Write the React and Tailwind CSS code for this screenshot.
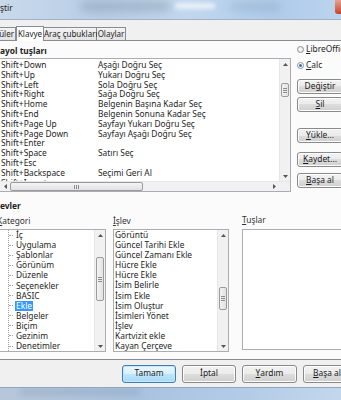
import React from "react";

const FONT = { fontFamily: '"Noto Sans", "DejaVu Sans", sans-serif' };

const shortcuts = [
  ["Shift+Down", "Aşağı Doğru Seç"],
  ["Shift+Up", "Yukarı Doğru Seç"],
  ["Shift+Left", "Sola Doğru Seç"],
  ["Shift+Right", "Sağa Doğru Seç"],
  ["Shift+Home", "Belgenin Başına Kadar Seç"],
  ["Shift+End", "Belgenin Sonuna Kadar Seç"],
  ["Shift+Page Up", "Sayfayı Yukarı Doğru Seç"],
  ["Shift+Page Down", "Sayfayı Aşağı Doğru Seç"],
  ["Shift+Enter", ""],
  ["Shift+Space", "Satırı Seç"],
  ["Shift+Esc", ""],
  ["Shift+Backspace", "Seçimi Geri Al"],
  ["Shift+Insert", ""],
];

const categories = [
  "İç", "Uygulama", "Şablonlar", "Görünüm", "Düzenle", "Seçenekler",
  "BASIC", "Ekle", "Belgeler", "Biçim", "Gezinim", "Denetimler",
];

const functions = [
  "Görüntü", "Güncel Tarihi Ekle", "Güncel Zamanı Ekle", "Hücre Ekle",
  "Hücre Ekle", "İsim Belirle", "İsim Ekle", "İsim Oluştur",
  "İsimleri Yönet", "İşlev", "Kartvizit ekle", "Kayan Çerçeve",
];

function U({ children }) {
  return <span className="underline underline-offset-1">{children}</span>;
}

function Btn({ children, def, className = "" }) {
  return (
    <div
      className={
        "flex items-center justify-center rounded-[3px] border text-[8.4px] text-[#1b1b1b] whitespace-nowrap " +
        (def
          ? "border-[#3c7fb1] bg-[linear-gradient(#eaf6fd,#d9f0fc_50%,#bee6fd_50%,#a7d9f5)] shadow-[inset_0_0_0_1px_#c6e6f9] "
          : "border-[#8a8a8a] bg-[linear-gradient(#f2f2f2,#ebebeb_50%,#dddddd_50%,#cfcfcf)] shadow-[inset_0_0_0_1px_#fcfcfc] ") +
        className
      }
    >
      {children}
    </div>
  );
}

function UpArrow() {
  return (
    <svg width="5" height="3" viewBox="0 0 5 3"><path d="M0 3 L2.5 0 L5 3Z" fill="#555" /></svg>
  );
}
function DownArrow() {
  return (
    <svg width="5" height="3" viewBox="0 0 5 3"><path d="M0 0 L2.5 3 L5 0Z" fill="#555" /></svg>
  );
}
function LeftArrow() {
  return (
    <svg width="3" height="5" viewBox="0 0 3 5"><path d="M3 0 L0 2.5 L3 5Z" fill="#555" /></svg>
  );
}
function RightArrow() {
  return (
    <svg width="3" height="5" viewBox="0 0 3 5"><path d="M0 0 L3 2.5 L0 5Z" fill="#555" /></svg>
  );
}

function Grip({ vertical }) {
  return vertical ? (
    <div className="flex flex-col gap-[1px]">
      <div className="w-[4px] h-[1px] bg-[#8c8c8c]" />
      <div className="w-[4px] h-[1px] bg-[#8c8c8c]" />
      <div className="w-[4px] h-[1px] bg-[#8c8c8c]" />
    </div>
  ) : (
    <div className="flex gap-[1px]">
      <div className="w-[1px] h-[4px] bg-[#8c8c8c]" />
      <div className="w-[1px] h-[4px] bg-[#8c8c8c]" />
      <div className="w-[1px] h-[4px] bg-[#8c8c8c]" />
    </div>
  );
}

function VScroll({ thumbTop, thumbH, height }) {
  return (
    <div className="w-[11px] flex flex-col bg-[#f1f1f1] border-l border-[#e6e6e6]" style={{ height }}>
      <div className="h-[10px] flex items-center justify-center"><UpArrow /></div>
      <div className="flex-1 flex flex-col">
        <div style={{ height: thumbTop }} />
        <div
          className="mx-[1px] rounded-[2px] border border-[#9b9b9b] bg-[linear-gradient(90deg,#f3f3f3,#e2e2e2)] flex items-center justify-center"
          style={{ height: thumbH }}
        >
          <Grip vertical />
        </div>
      </div>
      <div className="h-[10px] flex items-center justify-center"><DownArrow /></div>
    </div>
  );
}

export default function App() {
  return (
    <div className="w-[341px] h-[400px] overflow-hidden flex flex-col bg-[#f0f0f0] text-[#1e1e1e]" style={FONT}>
      {/* Title bar */}
      <div className="relative h-[19px] shrink-0 overflow-hidden bg-[linear-gradient(90deg,#c9d9ea,#b7cde6_30%,#c2d7ee_55%,#aecbea_80%,#bcd4ee)]">
        <div className="absolute left-[80px] top-[2px] w-[90px] h-[9px] rounded-full bg-[#8e9fb3] opacity-60 blur-[4px]" />
        <div className="absolute left-[175px] top-[3px] w-[40px] h-[6px] rounded-full bg-[#f4f8fc] opacity-80 blur-[2px]" />
        <div className="absolute left-[230px] top-[4px] w-[50px] h-[6px] rounded-full bg-[#7f95ad] opacity-40 blur-[4px]" />
        <div className="absolute right-[-6px] top-[0px] w-[12px] h-[14px] rounded-b-[3px] bg-[linear-gradient(#e8a293,#c7422a)]" />
        <div className="relative pl-0 pt-[3px] text-[8.4px] leading-[10px] text-[#1a1a1a]">ştir</div>
      </div>
      <div className="h-[1px] bg-[#9fb2c8] shrink-0" />
      <div className="h-[5px] shrink-0" />

      {/* Tabs */}
      <div className="h-[15px] shrink-0 flex items-end relative z-10">
        <div className="w-[16px] h-[13px] border border-l-0 border-b-0 border-[#898c95] bg-[linear-gradient(#f3f3f3,#e3e3e3)] text-[8px] leading-[12px] flex justify-end pr-[1px] overflow-hidden">
          <span className="whitespace-nowrap">üler</span>
        </div>
        <div className="w-[28px] h-[15px] -mb-[1px] border border-b-0 border-[#898c95] bg-white text-[8px] leading-[13px] text-center">Klavye</div>
        <div className="w-[53px] h-[13px] border border-l-0 border-b-0 border-[#898c95] bg-[linear-gradient(#f3f3f3,#e3e3e3)] text-[8px] leading-[12px] text-center whitespace-nowrap">Araç çubukları</div>
        <div className="w-[29px] h-[13px] border border-l-0 border-b-0 border-[#898c95] bg-[linear-gradient(#f3f3f3,#e3e3e3)] text-[8px] leading-[12px] text-center">Olaylar</div>
      </div>

      {/* Tab panel */}
      <div className="h-[320px] shrink-0 border-t border-b border-[#898c95] bg-[#fbfbfb] flex flex-col">
        <div className="flex">
          {/* left: shortcut list */}
          <div className="w-[291px] shrink-0 flex flex-col">
            <div className="h-[17px] pt-[5px] text-[8.4px] leading-[10px] font-bold">ayol tuşları</div>
            <div className="h-[134px] -ml-[1px] border border-[#abadb3] bg-white flex flex-col">
              <div className="flex h-[122px]">
                <div className="flex-1 overflow-hidden pt-[1px]">
                  {shortcuts.map(([k, f], i) => (
                    <div key={i} className="flex h-[9.8px] text-[8.4px] leading-[9.8px] whitespace-nowrap">
                      <div className="w-[98px] pl-[1px]">{k}</div>
                      <div>{f}</div>
                    </div>
                  ))}
                </div>
                <VScroll thumbTop={14} thumbH={14} height={122} />
              </div>
              <div className="flex h-[10px] bg-[#f1f1f1] border-t border-[#e6e6e6]">
                <div className="w-[10px] flex items-center justify-center"><LeftArrow /></div>
                <div className="flex-1 flex items-center">
                  <div className="w-[133px] h-[9px] rounded-[2px] border border-[#9b9b9b] bg-[linear-gradient(#f3f3f3,#e2e2e2)] flex items-center justify-center">
                    <Grip />
                  </div>
                </div>
                <div className="w-[10px] flex items-center justify-center"><RightArrow /></div>
                <div className="w-[11px] bg-[#f0f0f0]" />
              </div>
            </div>
          </div>

          {/* right column */}
          <div className="flex-1 flex flex-col pl-[6px] pt-[3px]">
            <div className="h-[10px] flex items-center gap-[2px] text-[8.4px] whitespace-nowrap">
              <div className="w-[7px] h-[7px] rounded-full border border-[#8e8f8f] bg-[radial-gradient(#ffffff,#dcdcdc)] shrink-0" />
              <span><U>L</U>ibreOffice</span>
            </div>
            <div className="h-[6px]" />
            <div className="h-[10px] flex items-center gap-[2px] text-[8.4px]">
              <div className="w-[7px] h-[7px] rounded-full border border-[#8e8f8f] bg-white flex items-center justify-center shrink-0">
                <div className="w-[3px] h-[3px] rounded-full bg-[#2d72b8]" />
              </div>
              <span><U>C</U>alc</span>
            </div>
            <div className="h-[9px]" />
            <Btn className="w-[46px] h-[15px]">De<U>ğ</U>iştir</Btn>
            <div className="h-[3px]" />
            <Btn className="w-[46px] h-[15px]"><U>S</U>il</Btn>
            <div className="h-[16px]" />
            <Btn className="w-[46px] h-[15px]"><U>Y</U>ükle...</Btn>
            <div className="h-[9px]" />
            <Btn className="w-[46px] h-[15px]"><U>K</U>aydet...</Btn>
            <div className="h-[6px]" />
            <Btn className="w-[46px] h-[15px]"><U>B</U>aşa al</Btn>
          </div>
        </div>

        {/* İşlevler */}
        <div className="h-[10px] mt-[9px] text-[8.4px] leading-[10px] font-bold">evler</div>
        <div className="flex mt-[5px]">
          {/* Kategori */}
          <div className="w-[113px] shrink-0 flex flex-col">
            <div className="h-[10px] -ml-[3px] text-[8.4px] leading-[10px] text-[#333]"><U>K</U>ategori</div>
            <div className="h-[3px]" />
            <div className="w-[107px] h-[123px] -ml-[1px] border border-[#abadb3] bg-white flex">
              <div className="flex-1 relative overflow-hidden">
                <div className="absolute left-[8px] top-0 bottom-0 border-l border-dotted border-[#a0a0a0]" />
                {categories.map((c, i) => (
                  <div key={i} className="flex items-center h-[10.1px]">
                    <div className="w-[9px]" />
                    <div className="w-[4px] border-t border-dotted border-[#a0a0a0]" />
                    <div className="w-[2px]" />
                    <div
                      className={
                        "text-[8.4px] leading-[10px] px-[1px] whitespace-nowrap " +
                        (c === "Ekle" ? "bg-[#3399ff] text-white" : "")
                      }
                    >
                      {c}
                    </div>
                  </div>
                ))}
              </div>
              <VScroll thumbTop={17} thumbH={44} height={121} />
            </div>
          </div>

          {/* İşlev */}
          <div className="w-[129px] shrink-0 flex flex-col">
            <div className="h-[10px] text-[8.4px] leading-[10px] text-[#333]"><U>İ</U>şlev</div>
            <div className="h-[3px]" />
            <div className="w-[116px] h-[123px] border border-[#abadb3] bg-white flex">
              <div className="flex-1 overflow-hidden">
                {functions.map((f, i) => (
                  <div key={i} className="h-[10.1px] pl-[1px] text-[8.4px] leading-[10.1px] whitespace-nowrap">{f}</div>
                ))}
              </div>
              <VScroll thumbTop={47} thumbH={23} height={121} />
            </div>
          </div>

          {/* Tuşlar */}
          <div className="flex-1 flex flex-col">
            <div className="h-[10px] -mt-[1px] mb-[1px] text-[8.4px] leading-[10px] text-[#333]"><U>T</U>uşlar</div>
            <div className="h-[3px]" />
            <div className="w-[110px] h-[121px] border border-[#abadb3] bg-white" />
          </div>
        </div>
      </div>

      {/* bottom buttons */}
      <div className="h-[27px] shrink-0 flex items-center pl-[122px] gap-[6px]">
        <Btn def className="w-[54px] h-[18px] shrink-0">Tamam</Btn>
        <Btn className="w-[54px] h-[18px] shrink-0">İptal</Btn>
        <Btn className="w-[55px] h-[18px] shrink-0"><U>Y</U>ardım</Btn>
        <Btn className="w-[48px] h-[18px] shrink-0"><U>B</U>aşa al</Btn>
      </div>

      {/* window frame bottom */}
      <div className="relative flex-1 overflow-hidden border-t border-[#8ea6c2] bg-[linear-gradient(90deg,#b6c7d9,#a9c3df_40%,#b2cbe6_70%,#c3d7ec)]">
        <div className="absolute left-[20px] top-[2px] w-[120px] h-[4px] rounded-full bg-[#7d8ea3] opacity-50 blur-[3px]" />
      </div>
    </div>
  );
}
